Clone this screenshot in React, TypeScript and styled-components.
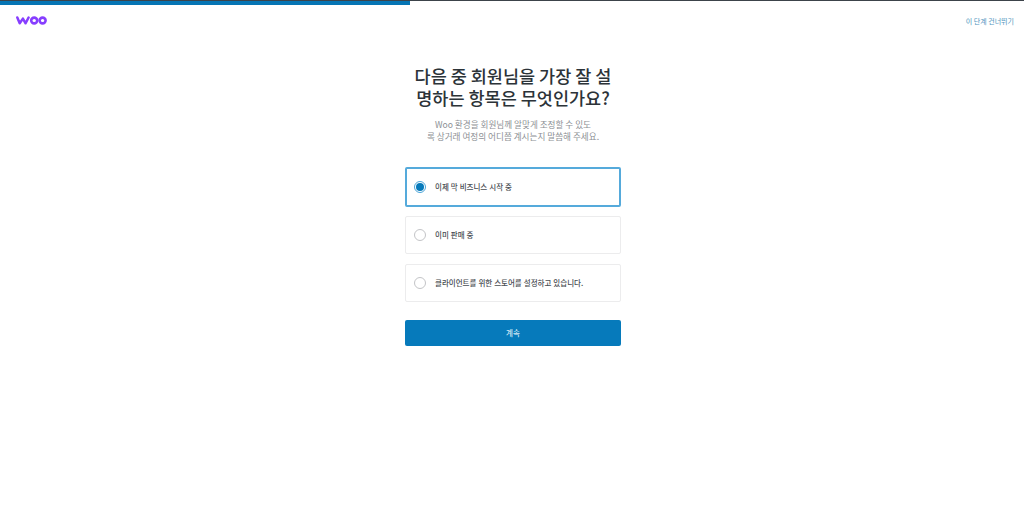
import React from "react";
import styled, { createGlobalStyle } from "styled-components";

const Global = createGlobalStyle`
  html, body { margin: 0; padding: 0; background: #fff; }
  body { font-family: "Noto Sans CJK KR", "Noto Sans", sans-serif; }
`;

const Page = styled.div`
  width: 1024px;
  height: 505px;
  overflow: hidden;
  display: flex;
  flex-direction: column;
  background: #fff;
`;

const Progress = styled.div`
  height: 4px;
  background: #fff;
  border-top: 1px solid #3c434a;
`;

const ProgressFill = styled.div`
  width: 410px;
  height: 4px;
  background: #0675b4;
`;

const Header = styled.header`
  height: 32px;
  padding: 0 10px 0 16px;
  display: flex;
  align-items: center;
  justify-content: space-between;

  svg {
    margin-bottom: 2px;
  }
`;

const Skip = styled.a`
  font-size: 7px;
  line-height: 12px;
  color: #4f94bd;
`;

const Main = styled.main`
  width: 216px;
  margin-left: 405px;
  padding-top: 28px;
  display: flex;
  flex-direction: column;
`;

const Title = styled.h1`
  margin: 0 -2px;
  font-size: 17.5px;
  line-height: 22px;
  font-weight: 500;
  color: #2c3338;
  text-align: center;
`;

const Lead = styled.p`
  margin: 9px -4px 0;
  font-size: 8.6px;
  line-height: 12px;
  color: #8c8f94;
  text-align: center;
`;

const Options = styled.div`
  margin-top: 25px;
  display: flex;
  flex-direction: column;
  gap: 10px;
`;

const Option = styled.label<{ $selected?: boolean }>`
  box-sizing: border-box;
  height: ${(p) => (p.$selected ? 39.5 : 38)}px;
  margin-bottom: ${(p) => (p.$selected ? -0.5 : 0)}px;
  padding: 0 ${(p) => (p.$selected ? 7 : 8)}px;
  display: flex;
  align-items: center;
  gap: 9px;
  border-radius: 2px;
  border: ${(p) => (p.$selected ? "2px solid #55aadb" : "1px solid #ececed")};
  background: #fff;
`;

const Radio = styled.span<{ $selected?: boolean }>`
  box-sizing: border-box;
  width: 12px;
  height: 12px;
  flex: none;
  border-radius: 50%;
  border: 1px solid ${(p) => (p.$selected ? "#4ba5d8" : "#c3c4c7")};
  display: flex;
  align-items: center;
  justify-content: center;

  &::after {
    content: "";
    display: ${(p) => (p.$selected ? "block" : "none")};
    width: 8px;
    height: 8px;
    border-radius: 50%;
    background: #067abb;
  }
`;

const OptionText = styled.span`
  font-size: 7.5px;
  line-height: 12px;
  font-weight: 500;
  word-spacing: 0.3px;
  color: #484d52;
`;

const Continue = styled.button`
  margin-top: 18px;
  height: 25.5px;
  border: none;
  border-radius: 2px;
  background: #067abb;
  color: #d5e8f3;
  font-family: inherit;
  font-size: 7.5px;
  font-weight: 500;
  padding: 0;
`;

const WooLogo = () => (
  <svg width="31" height="9" viewBox="0 0 31 9" fill="none" aria-label="Woo">
    <path
      d="M1.3 1.5 L3.7 7.3 L6.9 2.6 L9.6 7.3 L12.6 1.5"
      stroke="#873eff"
      strokeWidth="2.5"
      strokeLinejoin="round"
      strokeLinecap="round"
    />
    <ellipse cx="18.2" cy="4.5" rx="3" ry="2.9" stroke="#873eff" strokeWidth="2.6" />
    <ellipse cx="26.6" cy="4.5" rx="3" ry="2.9" stroke="#873eff" strokeWidth="2.6" />
  </svg>
);

const choices = [
  { label: "이제 막 비즈니스 시작 중", selected: true },
  { label: "이미 판매 중", selected: false },
  { label: "클라이언트를 위한 스토어를 설정하고 있습니다.", selected: false },
];

export default function App() {
  return (
    <Page>
      <Global />
      <Progress>
        <ProgressFill />
      </Progress>
      <Header>
        <WooLogo />
        <Skip>이 단계 건너뛰기</Skip>
      </Header>
      <Main>
        <Title>
          다음 중 회원님을 가장 잘 설
          <br />
          명하는 항목은 무엇인가요?
        </Title>
        <Lead>
          Woo 환경을 회원님께 알맞게 조정할 수 있도
          <br />록 상거래 여정의 어디쯤 계시는지 말씀해 주세요.
        </Lead>
        <Options>
          {choices.map((c) => (
            <Option key={c.label} $selected={c.selected}>
              <Radio $selected={c.selected} />
              <OptionText>{c.label}</OptionText>
            </Option>
          ))}
        </Options>
        <Continue>계속</Continue>
      </Main>
    </Page>
  );
}
